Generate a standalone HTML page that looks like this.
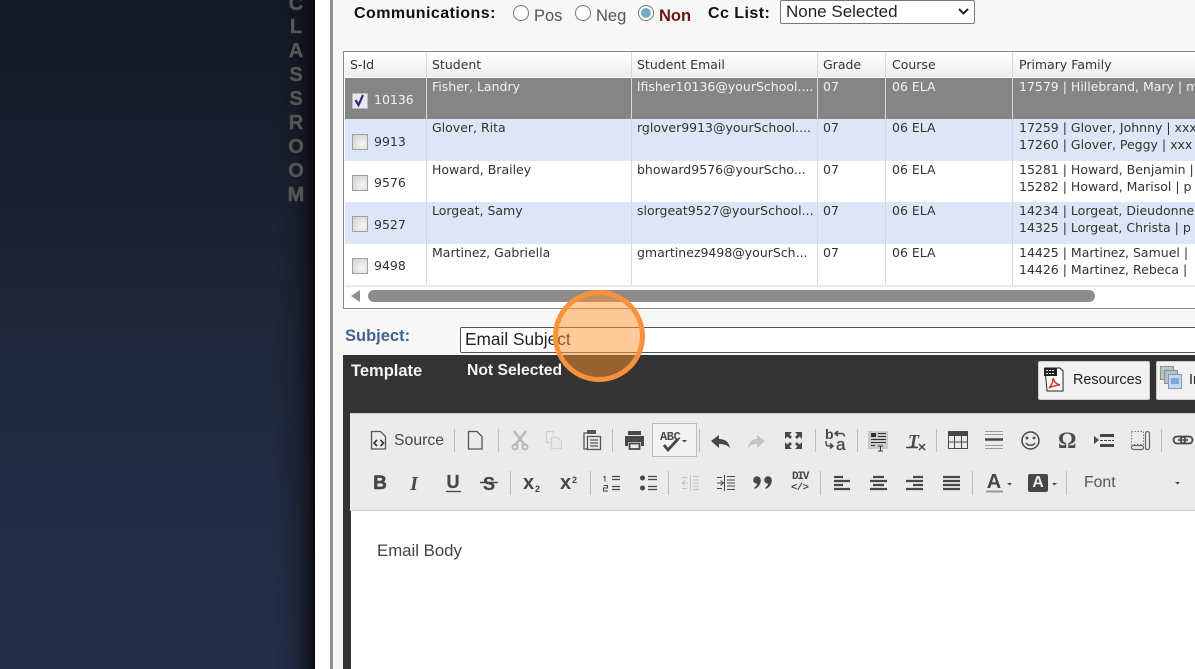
<!DOCTYPE html>
<html><head><meta charset="utf-8"><title>Email</title>
<style>
html,body{margin:0;padding:0;width:1195px;height:669px;overflow:hidden;background:#fff}
body{position:relative;font-family:"Liberation Sans",sans-serif}
#p{position:absolute;left:0;top:0;width:1195px;height:669px;overflow:hidden}
.a{position:absolute}
.t{position:absolute;white-space:nowrap;line-height:18px;height:18px}
.c{font-family:"DejaVu Sans",sans-serif;font-size:12.500px;color:#333;line-height:17px;height:17px;margin-top:-1px}
.w{color:#f2f2f2}
.l{position:absolute;width:1px}
.cb{position:absolute;left:352px;width:14px;height:14px;border:1px solid #a0a0a0;background:radial-gradient(circle at 65% 65%,#f6f6f6,#cfcfcf)}
.v{position:absolute;left:286px;width:20px;text-align:center;font:bold 20px/24px "Liberation Sans",sans-serif;color:#555;-webkit-text-stroke:.4px #555}
svg{position:absolute;left:0;top:0}
</style></head><body><div id="p">
<div class="a" style="left:0;top:0;width:315px;height:669px;background:linear-gradient(180deg,#121926 0,#1d2738 45%,#232e49 100%)"></div>
<div class="a" style="left:275px;top:0;width:40px;height:669px;background:linear-gradient(90deg,rgba(10,10,12,0),rgba(10,10,12,.2) 50%,rgba(10,10,12,.55) 80%,rgba(8,8,10,.95))"></div>
<div class="v" style="top:-8px">C</div><div class="v" style="top:15px">L</div><div class="v" style="top:39px">A</div><div class="v" style="top:63px">S</div><div class="v" style="top:87px">S</div><div class="v" style="top:111px">R</div><div class="v" style="top:135px">O</div><div class="v" style="top:159px">O</div><div class="v" style="top:183px">M</div>

<div class="a" style="left:330px;top:0;width:3px;height:669px;background:#8f8f8f"></div>
<div class="a" style="left:333px;top:0;width:862px;height:669px;background:#f7f7f7"></div>

<div class="t" style="left:354px;top:5px;font-weight:bold;font-size:16px;letter-spacing:.45px;color:#111">Communications:</div>
<div class="a" style="left:513px;top:5px;width:14px;height:14px;border:1px solid #777;border-radius:50%;background:#fff"></div>
<div class="t" style="left:534px;top:7px;font-size:16.500px;color:#555">Pos</div>
<div class="a" style="left:575px;top:5px;width:14px;height:14px;border:1px solid #777;border-radius:50%;background:#fff"></div>
<div class="t" style="left:596px;top:7px;font-size:16.500px;color:#555">Neg</div>
<div class="a" style="left:638px;top:5px;width:14px;height:14px;border:1px solid #777;border-radius:50%;background:#fff"></div>
<div class="a" style="left:641px;top:8px;width:10px;height:10px;border-radius:50%;background:#6fb0b8"></div>
<div class="t" style="left:659px;top:7px;font-size:16.500px;font-weight:bold;color:#6b1a0c">Non</div>
<div class="t" style="left:708px;top:5px;font-size:16px;font-weight:bold;letter-spacing:.45px;color:#111">Cc List:</div>
<div class="a" style="left:780px;top:0;width:193px;height:22px;border:1px solid #777;border-radius:2px;background:#fff"></div>
<div class="t" style="left:786px;top:3px;font-size:17px;color:#222">None Selected</div>
<svg width="1195" height="30" style="height:30px"><path d="M959 9l4.500 4.500L968 9" fill="none" stroke="#222" stroke-width="2"/></svg>

<!-- table -->
<div class="a" style="left:343px;top:51px;width:852px;height:256px;border:1px solid #888;border-right:0;background:#fff"></div>
<div class="a" style="left:345px;top:52px;width:850px;height:25px;background:linear-gradient(180deg,#fff,#eee)"></div>
<div class="a" style="left:345px;top:78px;width:850px;height:41px;background:#858585"></div>
<div class="a" style="left:345px;top:119px;width:850px;height:42px;background:#dce6f6"></div>
<div class="a" style="left:345px;top:161px;width:850px;height:41px;background:#fff"></div>
<div class="a" style="left:345px;top:202px;width:850px;height:42px;background:#dce6f6"></div>
<div class="a" style="left:345px;top:244px;width:850px;height:41px;background:#fff"></div>
<div class="a" style="left:345px;top:285px;width:850px;height:2px;background:#e3eaf5"></div>
<div class="l" style="left:426px;top:52px;height:233px;background:#d5dae2"></div>
<div class="l" style="left:631px;top:52px;height:233px;background:#d5dae2"></div>
<div class="l" style="left:817px;top:52px;height:233px;background:#d5dae2"></div>
<div class="l" style="left:885px;top:52px;height:233px;background:#d5dae2"></div>
<div class="l" style="left:1012px;top:52px;height:233px;background:#d5dae2"></div>

<div class="t c" style="left:350px;top:57px">S-Id</div><div class="t c" style="left:432px;top:57px">Student</div><div class="t c" style="left:637px;top:57px">Student Email</div><div class="t c" style="left:823px;top:57px">Grade</div><div class="t c" style="left:892px;top:57px">Course</div><div class="t c" style="left:1019px;top:57px">Primary Family</div>

<div class="cb" style="top:93px;border-color:#bbb;background:#e8e8f0"></div>
<svg width="1195" height="120" style="height:120px"><path d="M355.500 100l3 5 4.500-10" fill="none" stroke="#2a2a80" stroke-width="2.200"/></svg>
<div class="t c w" style="left:374px;top:92px">10136</div>
<div class="t c w" style="left:432px;top:79px">Fisher, Landry</div><div class="t c w" style="left:637px;top:79px">lfisher10136@yourSchool....</div><div class="t c w" style="left:823px;top:79px">07</div><div class="t c w" style="left:892px;top:79px">06 ELA</div><div class="t c w" style="left:1019px;top:79px">17579 | Hillebrand, Mary | m</div>

<div class="cb" style="top:134px"></div><div class="t c" style="left:374px;top:134px">9913</div>
<div class="t c" style="left:432px;top:120px">Glover, Rita</div><div class="t c" style="left:637px;top:120px">rglover9913@yourSchool....</div><div class="t c" style="left:823px;top:120px">07</div><div class="t c" style="left:892px;top:120px">06 ELA</div><div class="t c" style="left:1019px;top:120px">17259 | Glover, Johnny | xxx</div><div class="t c" style="left:1019px;top:137px">17260 | Glover, Peggy | xxx</div>

<div class="cb" style="top:175px"></div><div class="t c" style="left:374px;top:175px">9576</div>
<div class="t c" style="left:432px;top:162px">Howard, Brailey</div><div class="t c" style="left:637px;top:162px">bhoward9576@yourScho...</div><div class="t c" style="left:823px;top:162px">07</div><div class="t c" style="left:892px;top:162px">06 ELA</div><div class="t c" style="left:1019px;top:162px">15281 | Howard, Benjamin |</div><div class="t c" style="left:1019px;top:179px">15282 | Howard, Marisol | p</div>

<div class="cb" style="top:216px"></div><div class="t c" style="left:374px;top:217px">9527</div>
<div class="t c" style="left:432px;top:203px">Lorgeat, Samy</div><div class="t c" style="left:637px;top:203px">slorgeat9527@yourSchool...</div><div class="t c" style="left:823px;top:203px">07</div><div class="t c" style="left:892px;top:203px">06 ELA</div><div class="t c" style="left:1019px;top:203px">14234 | Lorgeat, Dieudonne</div><div class="t c" style="left:1019px;top:220px">14325 | Lorgeat, Christa | p</div>

<div class="cb" style="top:258px"></div><div class="t c" style="left:374px;top:258px">9498</div>
<div class="t c" style="left:432px;top:245px">Martinez, Gabriella</div><div class="t c" style="left:637px;top:245px">gmartinez9498@yourSch...</div><div class="t c" style="left:823px;top:245px">07</div><div class="t c" style="left:892px;top:245px">06 ELA</div><div class="t c" style="left:1019px;top:245px">14425 | Martinez, Samuel |</div><div class="t c" style="left:1019px;top:262px">14426 | Martinez, Rebeca |</div>

<!-- scrollbar -->
<div class="a" style="left:368px;top:290px;width:727px;height:12px;border-radius:6px;background:#8c8c8c"></div>
<svg width="1195" height="310" style="height:310px"><path d="M360 290v12l-9-6z" fill="#8c8c8c"/></svg>

<!-- subject -->
<div class="t" style="left:345px;top:326.500px;font-size:16.500px;font-weight:bold;color:#44628f">Subject:</div>
<div class="a" style="left:460px;top:327px;width:740px;height:24px;border:1px solid #555;border-radius:2px;background:#fff"></div>
<div class="t" style="left:465px;top:330px;font-size:17.300px;color:#222">Email Subject</div>

<!-- dark panel -->
<div class="a" style="left:343px;top:355px;width:852px;height:314px;background:#333"></div>
<div class="t" style="left:351px;top:361.500px;font-size:16.500px;font-weight:bold;color:#f4f4f4">Template</div>
<div class="t" style="left:467px;top:361.500px;font-size:15.700px;font-weight:bold;color:#f4f4f4">Not Selected</div>
<div class="a" style="left:1038px;top:361px;width:110px;height:37px;background:#f1f1f1;border:1px solid #ccc;border-radius:2px"></div>
<div class="t" style="left:1073px;top:371px;font-size:14.400px;color:#222">Resources</div>
<div class="a" style="left:1156px;top:361px;width:50px;height:37px;background:#f1f1f1;border:1px solid #ccc;border-radius:2px"></div>
<div class="t" style="left:1189px;top:371px;font-size:14.400px;color:#222">In</div>

<!-- editor -->
<div class="a" style="left:350px;top:413px;width:845px;height:97px;background:#ebebeb;border-top:1px solid #d0d0d0;box-sizing:border-box"></div>
<div class="a" style="left:350px;top:510px;width:845px;height:1px;background:#c8c8c8"></div>
<div class="a" style="left:351px;top:511px;width:844px;height:158px;background:#fff"></div>
<div class="t" style="left:377px;top:542px;font-size:16.800px;color:#444">Email Body</div>

<div class="t" style="left:394px;top:432px;font-size:15.800px;color:#474747">Source</div>
<div class="t" style="left:1084px;top:474px;font-size:15.800px;color:#555">Font</div>
<div class="a" style="left:652px;top:423px;width:43px;height:32px;background:#f3f3f3;border:1px solid #bcbcbc"></div>
<div class="t" style="left:372px;top:475px;font-size:19px;font-weight:bold;color:#474747;width:16px;text-align:center;-webkit-text-stroke:.5px #474747">B</div>
<div class="t" style="left:407px;top:475px;font-family:'Liberation Serif',serif;font-size:20px;font-weight:bold;font-style:italic;color:#474747;width:14px;text-align:center">I</div>
<div class="t" style="left:445px;top:473px;font-size:18px;font-weight:bold;color:#474747;width:16px;text-align:center;-webkit-text-stroke:.3px #474747">U</div>
<div class="t" style="left:481px;top:475px;font-size:18px;font-weight:bold;color:#474747;width:16px;text-align:center;-webkit-text-stroke:.3px #474747">S</div>
<div class="t" style="left:523px;top:474px;font-size:20px;font-weight:bold;color:#474747">x</div>
<div class="t" style="left:535px;top:480px;font-size:9px;font-weight:bold;color:#474747">2</div>
<div class="t" style="left:560px;top:474px;font-size:20px;font-weight:bold;color:#474747">x</div>
<div class="t" style="left:572px;top:471px;font-size:9px;font-weight:bold;color:#474747">2</div>
<div class="t" style="left:660px;top:431px;font-size:12px;font-family:'Liberation Mono',monospace;font-weight:bold;color:#474747;line-height:13px;height:13px;letter-spacing:-.4px">ABC</div>
<div class="t" style="left:792px;top:472px;font-size:11px;font-family:'Liberation Mono',monospace;font-weight:bold;color:#474747;line-height:11px;height:11px;letter-spacing:-1.200px">DIV</div>
<div class="t" style="left:791px;top:483px;font-size:10.500px;font-family:'Liberation Mono',monospace;font-weight:bold;color:#474747;line-height:10px;height:10px;letter-spacing:-.5px">&lt;/&gt;</div>
<div class="t" style="left:825px;top:425px;font-size:14px;font-weight:bold;color:#474747">b</div>
<div class="t" style="left:836px;top:436px;font-size:17px;color:#474747;-webkit-text-stroke:.3px #474747">a</div>
<div class="t" style="left:1058px;top:429px;font-family:'Liberation Serif',serif;font-size:23px;font-weight:bold;color:#4c4c4c;line-height:23px;height:23px">Ω</div>
<div class="t" style="left:908px;top:432px;font-family:'Liberation Serif',serif;font-size:18px;font-weight:bold;font-style:italic;color:#474747">T</div>
<div class="t" style="left:985px;top:473px;font-size:20px;font-weight:bold;color:#474747;width:18px;text-align:center">A</div>
<div class="a" style="left:1028px;top:474px;width:20px;height:18px;background:#474747;border-radius:2px"></div>
<div class="t" style="left:1028px;top:474px;font-size:16px;font-weight:bold;color:#ebebeb;width:20px;text-align:center">A</div>

<svg width="1195" height="669" style="height:669px" fill="none">
<!-- separators -->
<g stroke="#bdbdbd">
<path d="M454.500 429v23M498.500 429v23M612.500 429v23M699.500 429v23M815.500 429v23M857.500 429v23M936.500 429v23M1161.500 429v23"/>
<path d="M510.500 471v24M590.500 471v24M668.500 471v24M820.500 471v24M972.500 471v24M1066.500 471v24"/>
</g>
<!-- source doc -->
<path d="M371.500 431.500h9l5 5v12.500h-14z" stroke="#555" stroke-width="1.300"/><path d="M377 440l-3 3 3 3M380.500 440l3 3-3 3" stroke="#333" stroke-width="1.600"/>
<!-- new page -->
<path d="M468.500 431.500h8.500l5 5v12.500h-13.500z" stroke="#555" stroke-width="1.300"/>
<!-- cut -->
<g stroke="#b8b8b8" stroke-width="2.500"><path d="M514 431l10 13M526 431l-10 13"/><circle cx="515" cy="447" r="2.500" stroke-width="2"/><circle cx="525" cy="447" r="2.500" stroke-width="2"/></g>
<!-- copy -->
<g stroke="#cfcfcf" stroke-width="1.300"><path d="M546.500 431.500h7v3M546.500 431.500v11h4"/><path d="M551.500 437.500h6l4 4v7h-10z"/></g>
<!-- paste -->
<g stroke="#555" stroke-width="1.300"><path d="M587 433h-3v16h3" /><rect x="587.500" y="436.500" width="13" height="13"/><path d="M590 440h8M590 443h8M590 446h8"/></g><rect x="587" y="430" width="9" height="4" fill="#555"/>
<!-- print -->
<path d="M628 431h13v4h-13z" fill="#474747"/><path d="M625 436h19v10h-3v-4h-13v4h-3z" fill="#474747"/><path d="M629.500 443.500h10v5.500h-10z" stroke="#474747" stroke-width="1.800"/>
<!-- spell -->
<path d="M664 445l4 5 10-11" stroke="#474747" stroke-width="2.800"/><path d="M682 440h5l-2.500 2.500z" fill="#474747"/>
<!-- undo/redo -->
<path d="M711 441l8-6v4c6 0 10 3 11 9-3-3-6-4-11-4v4z" fill="#474747"/>
<path d="M765 441l-8-6v4c-5 0-8 3-9 9 3-3 5-4 9-4v4z" fill="#c4c4c4"/>
<!-- maximize -->
<g fill="#474747"><path d="M785 432h7l-2.500 2.500 2.500 2.500-2 2-2.500-2.500-2.500 2.500z"/><path d="M802 432h-7l2.500 2.500-2.500 2.500 2 2 2.500-2.500 2.500 2.500z"/><path d="M785 449h7l-2.500-2.500 2.500-2.500-2-2-2.500 2.500-2.500-2.500z"/><path d="M802 449h-7l2.500-2.500-2.500-2.500 2-2 2.500 2.500 2.500-2.500z"/></g>
<!-- replace arrows -->
<path d="M838 431l-3 2.500 3 2.500M835 433.500h6c2.500 0 3.500 1 3.500 3" stroke="#474747" stroke-width="1.500"/><path d="M826 441v2c0 2 1 3 3 3h3M830 443.500l3 2.500-3 2.500" stroke="#474747" stroke-width="1.500"/>
<!-- template -->
<rect x="868" y="431" width="20" height="18" fill="#c9c9c9"/><path d="M871 433h5v4h-5z" fill="#333"/><path d="M878 433.500h8M878 436.500h8M871 439.500h15M871 442.500h15M871 445.500h4" stroke="#333"/><path d="M878 446h5M880.500 446v5M878 451h5" stroke="#333"/>
<!-- remove format -->
<path d="M906 447.500h12" stroke="#474747" stroke-width="1.500"/><path d="M919 444l6 6M925 444l-6 6" stroke="#474747" stroke-width="1.500"/>
<!-- table -->
<rect x="948" y="431" width="20" height="5" fill="#474747"/><rect x="948.500" y="431.500" width="19" height="17" stroke="#474747"/><path d="M954.500 436v12M961.500 436v12M948 442h20" stroke="#474747"/>
<!-- hr -->
<path d="M985 431.500h18M985 434.500h18M985 445.500h18M985 448.500h18" stroke="#9a9a9a"/><path d="M985 439.500h18" stroke="#444" stroke-width="2.500"/>
<!-- smiley -->
<circle cx="1030.500" cy="440.500" r="8.500" stroke="#474747" stroke-width="1.500"/><circle cx="1027" cy="438" r="1.400" fill="#474747"/><circle cx="1034" cy="438" r="1.400" fill="#474747"/><path d="M1026 443c2 3 7 3 9 0" stroke="#474747" stroke-width="1.500"/>
<!-- page break -->
<path d="M1094 436l5 4-5 4z" fill="#474747"/><path d="M1100 434h14v3h-14zM1100 444h14v3h-14z" fill="#474747"/><path d="M1100 440.500h14" stroke="#474747" stroke-dasharray="3 1"/>
<!-- iframe -->
<rect x="1131.500" y="431.500" width="12" height="13" stroke="#777" stroke-dasharray="1.500 1.500"/><rect x="1145.500" y="431.500" width="4" height="18" rx="2" stroke="#666" stroke-width="1.200"/><rect x="1131.500" y="445.500" width="12" height="4" rx="2" stroke="#666" stroke-width="1.200"/>
<!-- link -->
<rect x="1173.500" y="436.500" width="12" height="7" rx="3.500" stroke="#474747" stroke-width="1.800"/><rect x="1180.500" y="436.500" width="12" height="7" rx="3.500" stroke="#474747" stroke-width="1.800"/><path d="M1178 440h10" stroke="#474747" stroke-width="1.500"/>

<!-- U and S lines -->
<path d="M446 491.500h15" stroke="#474747" stroke-width="1.300"/>
<path d="M480 482.500h18" stroke="#474747" stroke-width="1.500"/>
<!-- OL -->
<path d="M612 476.500h8M612 479.500h8M612 486.500h8M612 489.500h8" stroke="#474747" stroke-width="1.300"/><path d="M605 476v5.500M603.500 477.500l1.500-1.500M603.500 485.500h4v2.500h-4v3h4.500" stroke="#474747"/>
<!-- UL -->
<circle cx="642.500" cy="478" r="2.500" fill="#474747"/><circle cx="642.500" cy="488" r="2.500" fill="#474747"/><path d="M648 476.500h9M648 479.500h9M648 486.500h9M648 489.500h9" stroke="#474747" stroke-width="1.300"/>
<!-- outdent -->
<g stroke="#c0c0c0"><path d="M690.500 475v16M693 476.500h6M693 480h6M693 483h6M693 486h6M693 489.500h6M682 483h6M685 480.500l-3 2.500 3 2.500M682 477.500h5M682 488.500h5"/></g>
<!-- indent -->
<g stroke="#474747"><path d="M724.500 475v16M727 476.500h8M727 480h8M727 483h8M727 486h8M727 489.500h8M717 483h6M720.500 480.500l3 2.500-3 2.500M717 477.500h5M717 488.500h5"/></g>
<!-- quote -->
<g fill="#474747"><circle cx="757" cy="480" r="3.800"/><circle cx="768" cy="480" r="3.800"/><path d="M760.800 480c0 4-2 7-6 9l-.6-1.200c2-1.500 3-3 3-5zM771.800 480c0 4-2 7-6 9l-.6-1.200c2-1.500 3-3 3-5z"/></g>
<!-- aligns -->
<g stroke="#474747" stroke-width="2.200">
<path d="M834 477h9M834 481h16M834 485h9M834 489h16"/>
<path d="M873 477h11M870 481h17M873 485h11M870 489h17"/>
<path d="M913 477h10M906 481h17M913 485h10M906 489h17"/>
<path d="M943 477h17M943 481h17M943 485h17M943 489h17"/>
</g>
<!-- A underline, carets -->
<path d="M986 491.500h17" stroke="#999" stroke-width="2"/>
<path d="M1007 483h5l-2.500 2.500zM1052 483h5l-2.500 2.500zM1175 482h5l-2.500 2.500z" fill="#474747"/>

<!-- pdf icon -->
<path d="M1045 368h15l3 3v20h-16z" fill="#fff" stroke="#222"/><rect x="1044" y="368" width="13" height="8" fill="#222"/><path d="M1046 370.500h9M1046 373.500h9" stroke="#eee" stroke-dasharray="2 1"/>
<path d="M1049 388c3-3 4-7 4-10 1 4 3 6 7 7-4 0-7 1-11 3z" stroke="#d9352a" stroke-width="1.500"/>
<!-- insert icon -->
<rect x="1160.500" y="366.500" width="13" height="13" fill="#b4ccb4" stroke="#8a8f9a"/><rect x="1164.500" y="370.500" width="13" height="13" fill="#c0b8d4" stroke="#8a8f9a"/><rect x="1168.500" y="374.500" width="13" height="14" fill="#c0d8f0" stroke="#8898aa"/><rect x="1171" y="378" width="8" height="6" fill="#7ea6d8"/>

<!-- highlight circle -->
<circle cx="599" cy="336" r="43.500" fill="#ff9432" fill-opacity=".485" stroke="#f7923a" stroke-width="5"/>
</svg>
</div></body></html>
